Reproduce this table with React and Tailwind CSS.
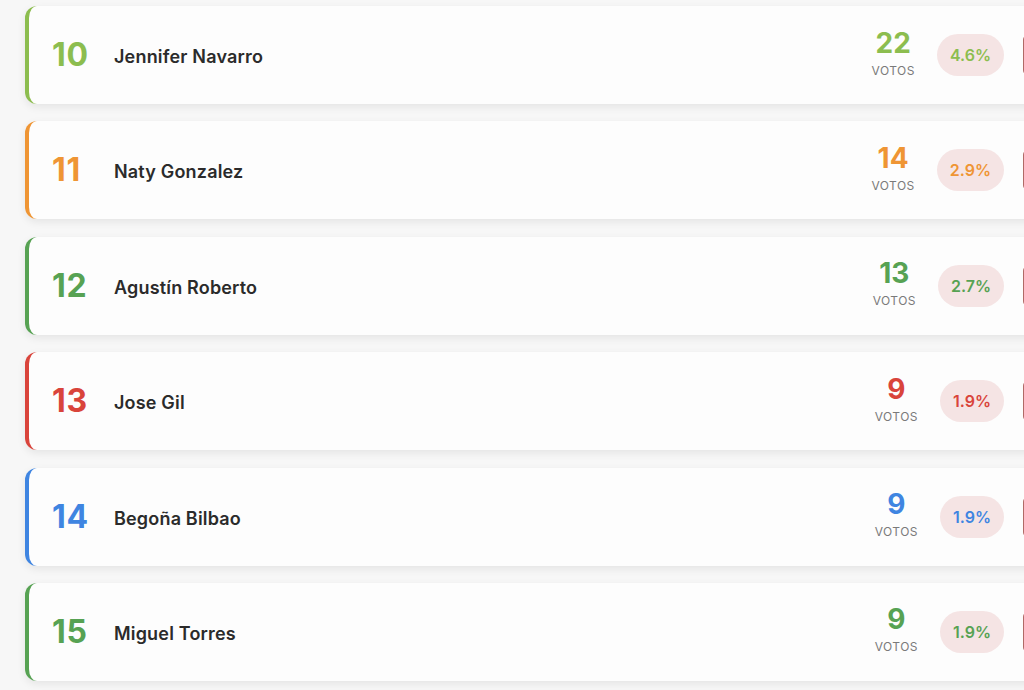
import React from 'react';

const rows = [
  { pos: 10, name: 'Jennifer Navarro', votes: 22, pct: '4.6%', color: '#8cbd4f' },
  { pos: 11, name: 'Naty Gonzalez', votes: 14, pct: '2.9%', color: '#ef9534' },
  { pos: 12, name: 'Agustín Roberto', votes: 13, pct: '2.7%', color: '#57a253' },
  { pos: 13, name: 'Jose Gil', votes: 9, pct: '1.9%', color: '#d9443b' },
  { pos: 14, name: 'Begoña Bilbao', votes: 9, pct: '1.9%', color: '#3f85e1' },
  { pos: 15, name: 'Miguel Torres', votes: 9, pct: '1.9%', color: '#57a253' },
];

const RankCard = ({ row }) => (
  <div
    className="flex items-center h-[98px] w-[1058px] shrink-0 bg-[#fdfdfd] rounded-xl border-l-4 shadow-[0_3px_8px_rgba(0,0,0,0.08)] pl-[23px] pr-5"
    style={{ borderLeftColor: row.color }}
  >
    <div className="w-[62px] text-[32px] font-bold leading-none tracking-[0.02em]" style={{ color: row.color }}>
      {row.pos}
    </div>
    <div className="flex-1 pt-[3px] text-[18px] font-semibold tracking-[0.01em] text-[#2b2b2b]">{row.name}</div>
    <div className="flex flex-col items-center mb-[5px]">
      <span className="text-[28px] font-bold leading-none" style={{ color: row.color }}>
        {row.votes}
      </span>
      <span className="mt-[8px] text-[12px] tracking-[0.04em] text-[#7a7a7a] leading-none">VOTOS</span>
    </div>
    <div
      className="ml-[22px] h-[42px] px-[13px] flex items-center rounded-full bg-[#f5e4e4] text-[16px] font-semibold"
      style={{ color: row.color }}
    >
      {row.pct}
    </div>
    <div className="ml-[19px] w-[40px] h-[42px] rounded-md bg-[#b06a66]" />
  </div>
);

export default function App() {
  return (
    <div
      className="w-screen h-[690px] overflow-hidden bg-[#f7f7f7]"
      style={{ fontFamily: 'Inter, "Noto Sans", sans-serif' }}
    >
      <div className="flex flex-col gap-[17.4px] pt-[6px] pl-[25px]">
        {rows.map((row) => (
          <RankCard key={row.pos} row={row} />
        ))}
      </div>
    </div>
  );
}
